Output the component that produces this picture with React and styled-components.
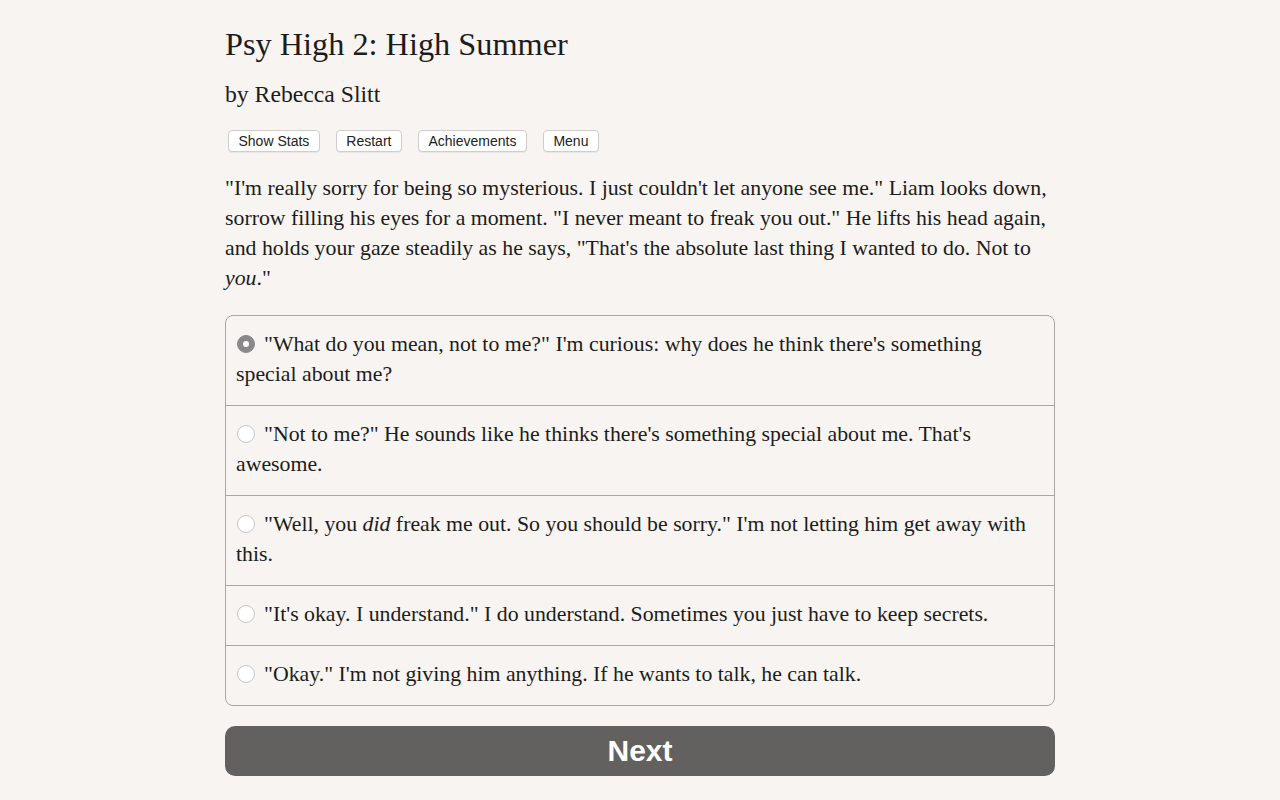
import React, { useState } from "react";
import styled, { createGlobalStyle } from "styled-components";

const Global = createGlobalStyle`
  html, body { margin: 0; padding: 0; background: #f7f4f1; }
  body { font-family: "Liberation Serif", "Times New Roman", serif; color: #1c1c1c; }
`;

const Page = styled.div`
  width: 830px;
  margin: 0 auto;
  padding-top: 22px;
  box-sizing: border-box;
`;

const Title = styled.h1`
  margin: 0;
  font-weight: normal;
  font-size: 32.3px;
  line-height: 44px;
`;

const Byline = styled.h2`
  margin: 12px 0 0;
  font-weight: normal;
  font-size: 23.7px;
  line-height: 32px;
`;

const Toolbar = styled.div`
  display: flex;
  gap: 16px;
  margin: 20px 0 0 3px;
`;

const ToolButton = styled.button`
  font-family: "Liberation Sans", Arial, sans-serif;
  font-size: 14px;
  color: #222;
  background: #fff;
  border: 1px solid #d0cdca;
  border-radius: 4px;
  height: 22px;
  padding: 0 9.5px;
  box-shadow: 0 1px 1px rgba(0,0,0,0.06);
`;

const Passage = styled.p`
  margin: 21px 0 0;
  font-size: 21.8px;
  line-height: 30px;
`;

const Choices = styled.div`
  margin-top: 22px;
  border: 1px solid #a9a7a5;
  border-radius: 8px;
  overflow: hidden;
`;

const Choice = styled.label`
  display: block;
  padding: 13px 10px 16px;
  font-size: 21.8px;
  line-height: 30px;
  border-top: ${(p) => (p.$first ? "none" : "1px solid #a9a7a5")};
  cursor: pointer;
`;

const Radio = styled.span`
  display: inline-block;
  box-sizing: border-box;
  width: 18px;
  height: 18px;
  border-radius: 50%;
  margin: 0 9px 0 1px;
  vertical-align: -2px;
  background: ${(p) => (p.$checked ? "#8a8888" : "#fff")};
  border: 1px solid ${(p) => (p.$checked ? "#8a8888" : "#c9c7c5")};
  position: relative;
  &::after {
    content: "";
    display: ${(p) => (p.$checked ? "block" : "none")};
    position: absolute;
    left: 50%;
    top: 50%;
    width: 6px;
    height: 6px;
    margin: -3px 0 0 -3px;
    border-radius: 50%;
    background: #fff;
  }
`;

const NextButton = styled.button`
  display: block;
  width: 100%;
  margin-top: 20px;
  height: 50px;
  border: none;
  border-radius: 10px;
  background: #636160;
  color: #fff;
  font-family: "Liberation Sans", Arial, sans-serif;
  font-weight: bold;
  font-size: 30px;
`;

const options = [
  <>"What do you mean, not to me?" I'm curious: why does he think there's something special about me?</>,
  <>"Not to me?" He sounds like he thinks there's something special about me. That's awesome.</>,
  <>"Well, you <i>did</i> freak me out. So you should be sorry." I'm not letting him get away with this.</>,
  <>"It's okay. I understand." I do understand. Sometimes you just have to keep secrets.</>,
  <>"Okay." I'm not giving him anything. If he wants to talk, he can talk.</>,
];

export default function App() {
  const [sel, setSel] = useState(0);
  return (
    <>
      <Global />
      <Page>
        <Title>Psy High 2: High Summer</Title>
        <Byline>by Rebecca Slitt</Byline>
        <Toolbar>
          <ToolButton>Show Stats</ToolButton>
          <ToolButton>Restart</ToolButton>
          <ToolButton>Achievements</ToolButton>
          <ToolButton>Menu</ToolButton>
        </Toolbar>
        <Passage>
          "I'm really sorry for being so mysterious. I just couldn't let anyone see me." Liam looks down,
          sorrow filling his eyes for a moment. "I never meant to freak you out." He lifts his head again,
          and holds your gaze steadily as he says, "That's the absolute last thing I wanted to do. Not to{" "}
          <i>you</i>."
        </Passage>
        <Choices>
          {options.map((o, i) => (
            <Choice key={i} $first={i === 0} onClick={() => setSel(i)}>
              <Radio $checked={sel === i} />
              {o}
            </Choice>
          ))}
        </Choices>
        <NextButton>Next</NextButton>
      </Page>
    </>
  );
}
